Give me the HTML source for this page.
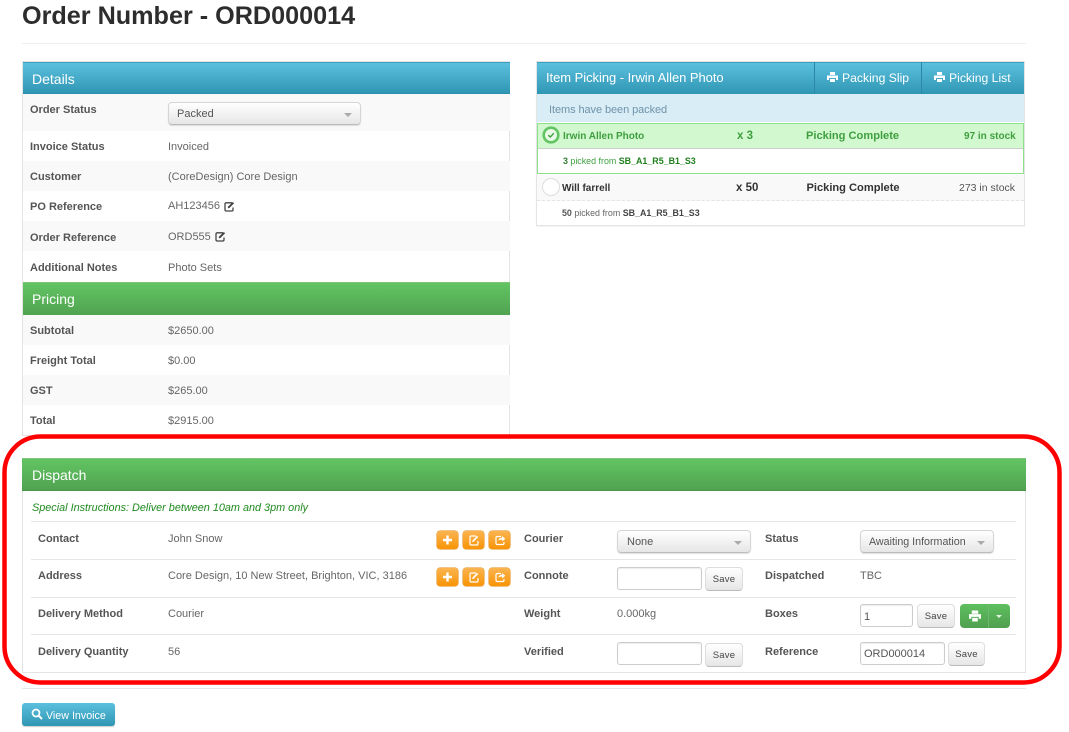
<!DOCTYPE html>
<html><head><meta charset="utf-8"><style>
html,body{margin:0;padding:0;background:#fff;width:1069px;height:732px;overflow:hidden}
body{font-family:"Liberation Sans",Arial,sans-serif;font-size:11px;color:#666;position:relative}
.a{position:absolute;white-space:nowrap}
.l{position:absolute;font-weight:bold;color:#555;white-space:nowrap;line-height:14px}
.v{position:absolute;color:#666;white-space:nowrap;line-height:14px}
.r{position:absolute;left:23px;width:487px}
.blue{background:linear-gradient(#5bc0de,#2f96b4)}
.green{background:linear-gradient(#62c462,#51a351)}
.h{position:absolute;color:#fff;font-size:14px;line-height:18px;white-space:nowrap}
.sel{position:absolute;height:22px;border:1px solid #d5d5d5;border-bottom:1px solid #bbb;border-radius:4px;background:linear-gradient(#fff,#e6e6e6);box-shadow:0 1px 1px rgba(0,0,0,.12);color:#555;line-height:22px;padding-left:8px;box-sizing:content-box;white-space:nowrap}
.sel i{position:absolute;top:10px;right:8px;width:0;height:0;border:4px solid transparent;border-top-color:#aaa;border-bottom:0}
.inp{position:absolute;height:21px;border:1px solid #ccc;border-radius:3px;background:#fff;color:#555;line-height:23px;padding-left:3px;box-shadow:inset 0 1px 1px rgba(0,0,0,.08)}
.sv{position:absolute;width:36px;height:22px;border:1px solid #ddd;border-bottom-color:#bbb;border-radius:4px;background:linear-gradient(#fff,#e6e6e6);font-size:9.5px;line-height:23px;text-align:center;color:#444;letter-spacing:.2px}
.o{position:absolute;width:21px;height:18px;border-radius:3px;background:linear-gradient(#fbb450,#f89406);border:0;box-shadow:0 0 0 .5px #e08a10}
.o svg{position:absolute;left:0;top:0}
.hr{position:absolute;height:1px;background:#e6e6e6}
</style></head><body>

<div class="a" style="left:22px;top:1px;font-size:25.2px;font-weight:bold;color:#2d2d2d;line-height:30px">Order Number - ORD000014</div>
<div class="hr" style="left:22px;top:43px;width:1004px;background:#eee"></div>

<!-- Details panel -->
<div class="a" style="left:22px;top:61px;width:488px;height:375px;border:1px solid #e4e4e4;box-sizing:border-box"></div>
<div class="r blue" style="top:62px;height:32px;left:23px;border-top:1px solid #3d9fc0;box-sizing:border-box;border-bottom:1px solid #2b8fae"></div>
<div class="h" style="left:32px;top:70px">Details</div>
<div class="r" style="top:94px;height:37px;background:#f9f9f9"></div>
<div class="r" style="top:161px;height:30px;background:#f9f9f9"></div>
<div class="r" style="top:221px;height:30px;background:#f9f9f9"></div>

<div class="l" style="left:30px;top:103px">Order Status</div>
<div class="sel" style="left:168px;top:102px;width:183px;height:21px;line-height:23px">Packed<i></i></div>
<div class="l" style="left:30px;top:140px">Invoice Status</div><div class="v" style="left:168px;top:140px">Invoiced</div>
<div class="l" style="left:30px;top:170px">Customer</div><div class="v" style="left:168px;top:170px">(CoreDesign) Core Design</div>
<div class="l" style="left:30px;top:200px">PO Reference</div><div class="v" style="left:168px;top:199px">AH123456</div>
<svg class="a" style="left:224px;top:201px" width="11" height="11" viewBox="0 0 11 11"><path d="M8 1.8H2.2A1.2 1.2 0 0 0 1 3v5.8A1.2 1.2 0 0 0 2.2 10h5.6A1.2 1.2 0 0 0 9 8.8V6.5" fill="none" stroke="#444" stroke-width="1.3"/><path d="M4 5.6L8.8 1l1.3 1.2L5.4 7 3.8 7.3z" fill="#444"/></svg>
<div class="l" style="left:30px;top:231px">Order Reference</div><div class="v" style="left:168px;top:230px">ORD555</div>
<svg class="a" style="left:215px;top:231px" width="11" height="11" viewBox="0 0 11 11"><path d="M8 1.8H2.2A1.2 1.2 0 0 0 1 3v5.8A1.2 1.2 0 0 0 2.2 10h5.6A1.2 1.2 0 0 0 9 8.8V6.5" fill="none" stroke="#444" stroke-width="1.3"/><path d="M4 5.6L8.8 1l1.3 1.2L5.4 7 3.8 7.3z" fill="#444"/></svg>
<div class="l" style="left:30px;top:261px">Additional Notes</div><div class="v" style="left:168px;top:261px">Photo Sets</div>

<div class="r green" style="top:282px;height:33px;border-top:1px solid #7cc37c;box-sizing:border-box"></div>
<div class="h" style="left:32px;top:290px">Pricing</div>
<div class="r" style="top:315px;height:30px;background:#f9f9f9"></div>
<div class="r" style="top:375px;height:30px;background:#f9f9f9"></div>
<div class="l" style="left:30px;top:324px">Subtotal</div><div class="v" style="left:168px;top:324px">$2650.00</div>
<div class="l" style="left:30px;top:354px">Freight Total</div><div class="v" style="left:168px;top:354px">$0.00</div>
<div class="l" style="left:30px;top:384px">GST</div><div class="v" style="left:168px;top:384px">$265.00</div>
<div class="l" style="left:30px;top:414px">Total</div><div class="v" style="left:168px;top:414px">$2915.00</div>

<!-- Item picking panel -->
<div class="a" style="left:536px;top:61px;width:489px;height:165px;border:1px solid #e4e4e4;box-sizing:border-box;box-shadow:0 1px 1px rgba(0,0,0,.05)"></div>
<div class="a blue" style="left:537px;top:62px;width:487px;height:32px;border-top:1px solid #3d9fc0;box-sizing:border-box"></div>
<div class="h" style="left:546px;top:69px;font-size:13px;letter-spacing:-.05px">Item Picking - Irwin Allen Photo</div>
<div class="a" style="left:814px;top:62px;width:1px;height:32px;background:#2b88a6"></div>
<div class="a" style="left:921px;top:62px;width:1px;height:32px;background:#2b88a6"></div>
<svg class="a" style="left:827px;top:72px" width="11" height="10" viewBox="0 0 11 10"><path d="M3 0h5v3H3zM0 3.5h11V8H9V6H2v2H0zM3 7h5v3H3z" fill="#fff"/></svg>
<div class="h" style="left:842px;top:69px;font-size:12.2px">Packing Slip</div>
<svg class="a" style="left:934px;top:72px" width="11" height="10" viewBox="0 0 11 10"><path d="M3 0h5v3H3zM0 3.5h11V8H9V6H2v2H0zM3 7h5v3H3z" fill="#fff"/></svg>
<div class="h" style="left:949px;top:69px;font-size:12.2px">Picking List</div>

<div class="a" style="left:537px;top:94px;width:487px;height:28px;background:#d9edf7"></div>
<div class="a" style="left:549px;top:103px;color:#6f93a8;line-height:14px;font-size:11px;letter-spacing:-.08px">Items have been packed</div>

<div class="a" style="left:537px;top:123px;width:487px;height:51px;box-sizing:border-box;border:1px solid #8ce08c;background:#fff"></div>
<div class="a" style="left:538px;top:124px;width:485px;height:25px;background:#d2f8cf;border-bottom:1px solid #ccc;box-sizing:border-box"></div>
<svg class="a" style="left:542px;top:126px" width="18" height="18" viewBox="0 0 18 18"><circle cx="9" cy="9" r="7.3" fill="#e8fae6" stroke="#62c462" stroke-width="2.6"/><path d="M6.3 9.2l2 1.8L11.8 7.2" fill="none" stroke="#3f9f3f" stroke-width="1.4"/></svg>
<div class="a" style="left:563px;top:130px;font-weight:bold;color:#3f9f3f;font-size:10px;line-height:14px">Irwin Allen Photo</div>
<div class="a" style="left:737px;top:129px;font-weight:bold;color:#3f9f3f;line-height:14px;font-size:11.5px">x 3</div>
<div class="a" style="left:806px;top:129px;font-weight:bold;color:#3f9f3f;line-height:14px;font-size:11.1px">Picking Complete</div>
<div class="a" style="left:964px;top:130px;font-weight:bold;color:#3f9f3f;line-height:14px;font-size:10px">97 in stock</div>
<div class="a" style="left:563px;top:154px;color:#3f9f3f;font-size:8.9px;line-height:14px"><b style="color:#2f7f2f">3</b> picked from <b style="color:#1f7f1f">SB_A1_R5_B1_S3</b></div>

<div class="a" style="left:537px;top:175px;width:487px;height:26px;background:#f9f9f9;border-bottom:1px dashed #e4e4e4;box-sizing:border-box"></div>
<div class="a" style="left:542px;top:178px;width:18px;height:18px;border-radius:50%;background:#fff;border:1px solid #ddd;box-sizing:border-box"></div>
<div class="a" style="left:562px;top:182px;font-weight:bold;color:#333;font-size:10px;line-height:14px">Will farrell</div>
<div class="a" style="left:736px;top:181px;font-weight:bold;color:#333;line-height:14px;font-size:11.5px">x 50</div>
<div class="a" style="left:806.5px;top:181px;font-weight:bold;color:#333;line-height:14px;font-size:11.1px">Picking Complete</div>
<div class="a" style="left:959px;top:181px;color:#555;line-height:14px;font-size:10.5px">273 in stock</div>
<div class="a" style="left:562px;top:206px;color:#666;font-size:8.9px;line-height:14px"><b style="color:#555">50</b> picked from <b style="color:#444">SB_A1_R5_B1_S3</b></div>

<!-- Dispatch panel -->
<div class="a" style="left:22px;top:458px;width:1004px;height:215px;border:1px solid #e4e4e4;box-sizing:border-box"></div>
<div class="a green" style="left:22px;top:458px;width:1004px;height:33px;border-top:1px solid #7cc37c;border-bottom:1px solid #4a944a;box-sizing:border-box"></div>
<div class="h" style="left:32px;top:466px">Dispatch</div>
<div class="a" style="left:32px;top:501px;font-style:italic;color:#1f8a1f;font-size:10.85px;line-height:14px">Special Instructions: Deliver between 10am and 3pm only</div>
<div class="hr" style="left:31px;top:521px;width:985px"></div>
<div class="hr" style="left:31px;top:559px;width:985px"></div>
<div class="hr" style="left:31px;top:597px;width:985px"></div>
<div class="hr" style="left:31px;top:634px;width:985px"></div>
<div class="hr" style="left:22px;top:688px;width:1004px"></div>

<div class="l" style="left:38px;top:532px">Contact</div><div class="v" style="left:168px;top:532px">John Snow</div>
<div class="l" style="left:38px;top:569px">Address</div><div class="v" style="left:168px;top:569px">Core Design, 10 New Street, Brighton, VIC, 3186</div>
<div class="l" style="left:38px;top:607px">Delivery Method</div><div class="v" style="left:168px;top:607px">Courier</div>
<div class="l" style="left:38px;top:645px">Delivery Quantity</div><div class="v" style="left:168px;top:645px">56</div>

<div class="o" style="left:437px;top:531px"><svg width="21" height="18"><path d="M10.5 4.5v9M6 9h9" stroke="#fff" stroke-width="2.4"/></svg></div>
<div class="o" style="left:463px;top:531px"><svg width="21" height="18"><path d="M13 5H8.2A1.2 1.2 0 0 0 7 6.2v6.6A1.2 1.2 0 0 0 8.2 14h5.6a1.2 1.2 0 0 0 1.2-1.2V10" fill="none" stroke="#fff" stroke-width="1.2"/><path d="M9.5 9.5L14 4.8l1.2 1.2-4.5 4.7-1.6.3z" fill="#fff"/></svg></div>
<div class="o" style="left:489px;top:531px"><svg width="21" height="18"><path d="M12 5.5H8.2A1.2 1.2 0 0 0 7 6.7v5.6a1.2 1.2 0 0 0 1.2 1.2h5.6a1.2 1.2 0 0 0 1.2-1.2V11" fill="none" stroke="#fff" stroke-width="1.2"/><path d="M13 5v1.8c-2 0-3.3 1-3.5 3 .8-1 2-1.3 3.5-1.2V10.5L16.3 7.8z" fill="#fff"/></svg></div>
<div class="o" style="left:437px;top:568px"><svg width="21" height="18"><path d="M10.5 4.5v9M6 9h9" stroke="#fff" stroke-width="2.4"/></svg></div>
<div class="o" style="left:463px;top:568px"><svg width="21" height="18"><path d="M13 5H8.2A1.2 1.2 0 0 0 7 6.2v6.6A1.2 1.2 0 0 0 8.2 14h5.6a1.2 1.2 0 0 0 1.2-1.2V10" fill="none" stroke="#fff" stroke-width="1.2"/><path d="M9.5 9.5L14 4.8l1.2 1.2-4.5 4.7-1.6.3z" fill="#fff"/></svg></div>
<div class="o" style="left:489px;top:568px"><svg width="21" height="18"><path d="M12 5.5H8.2A1.2 1.2 0 0 0 7 6.7v5.6a1.2 1.2 0 0 0 1.2 1.2h5.6a1.2 1.2 0 0 0 1.2-1.2V11" fill="none" stroke="#fff" stroke-width="1.2"/><path d="M13 5v1.8c-2 0-3.3 1-3.5 3 .8-1 2-1.3 3.5-1.2V10.5L16.3 7.8z" fill="#fff"/></svg></div>

<div class="l" style="left:524px;top:532px">Courier</div>
<div class="sel" style="left:617px;top:530px;height:21px;line-height:23px;padding-left:9px;width:123px">None<i></i></div>
<div class="l" style="left:524px;top:569px">Connote</div>
<div class="inp" style="left:617px;top:567px;width:80px"></div>
<div class="sv" style="left:705px;top:567px">Save</div>
<div class="l" style="left:524px;top:607px">Weight</div><div class="v" style="left:617px;top:607px">0.000kg</div>
<div class="l" style="left:524px;top:645px">Verified</div>
<div class="inp" style="left:617px;top:642px;width:80px"></div>
<div class="sv" style="left:705px;top:643px">Save</div>

<div class="l" style="left:765px;top:532px">Status</div>
<div class="sel" style="left:860px;top:530px;width:124px;height:21px;line-height:23px;font-size:10.7px;padding-left:8px">Awaiting Information<i></i></div>
<div class="l" style="left:765px;top:569px">Dispatched</div><div class="v" style="left:860px;top:569px">TBC</div>
<div class="l" style="left:765px;top:607px">Boxes</div>
<div class="inp" style="left:860px;top:604px;width:48px;line-height:24px">1</div>
<div class="sv" style="left:917px;top:604px">Save</div>
<div class="a" style="left:960px;top:604px;width:50px;height:24px;border-radius:4px;background:linear-gradient(#5fbf5f,#4fa04f)"></div>
<div class="a" style="left:988px;top:604px;width:1px;height:24px;background:#6fb86f"></div>
<svg class="a" style="left:969px;top:610px" width="12" height="12" viewBox="0 0 13 12"><path d="M3 0h7v3.5H3zM0 4h13v5h-2.5V7h-8v2H0zM3.5 8h6v4h-6z" fill="#fff"/></svg>
<div class="a" style="left:996px;top:615px;width:0;height:0;border:3.5px solid transparent;border-top-color:#e4f4e4;border-bottom:0"></div>
<div class="l" style="left:765px;top:645px">Reference</div>
<div class="inp" style="left:860px;top:642px;width:80px">ORD000014</div>
<div class="sv" style="left:948px;top:642px;width:35px">Save</div>

<!-- View invoice -->
<div class="a blue" style="left:22px;top:703px;width:93px;height:23px;border-radius:3px;box-shadow:0 1px 1px rgba(0,0,0,.2)"></div>
<svg class="a" style="left:31px;top:708px" width="12" height="12" viewBox="0 0 12 12"><circle cx="5" cy="5" r="3.5" fill="none" stroke="#fff" stroke-width="1.7"/><path d="M7.5 7.5L11 11" stroke="#fff" stroke-width="2"/></svg>
<div class="a" style="left:46px;top:709px;color:#fff;line-height:14px;font-size:10.7px">View Invoice</div>

<!-- Red annotation -->
<svg class="a" style="left:0;top:0;pointer-events:none" width="1069" height="732"><rect x="4.5" y="436.5" width="1055" height="246" rx="36" ry="36" fill="none" stroke="#ff0000" stroke-width="4.5"/></svg>
</body></html>
